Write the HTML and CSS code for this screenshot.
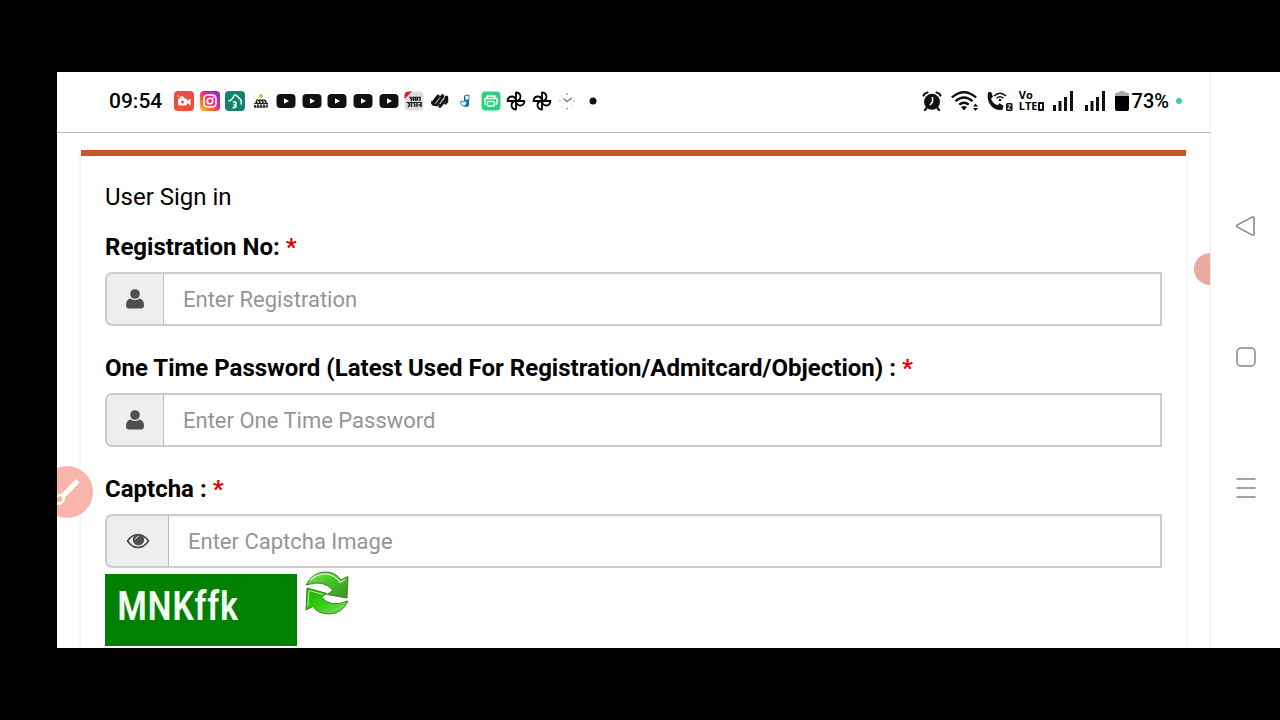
FILE: index.html
```html
<!DOCTYPE html>
<html lang="en">

<head>
  <meta charset="UTF-8">
  <meta name="viewport" content="width=device-width, initial-scale=1.0">
  <title>User Sign in</title>
  <link rel="stylesheet" href="styles.css">
</head>

<body>
  <svg width="0" height="0" class="defs" aria-hidden="true">
    <defs>
      <linearGradient id="insta" x1="0" y1="1" x2="1" y2="0">
        <stop offset="0" stop-color="#ffc83c"/>
        <stop offset="0.3" stop-color="#ff6a2c"/>
        <stop offset="0.6" stop-color="#e5218c"/>
        <stop offset="1" stop-color="#7a2fe0"/>
      </linearGradient>
      <linearGradient id="green" x1="0" y1="0" x2="1" y2="1">
        <stop offset="0" stop-color="#8be06a"/>
        <stop offset="0.45" stop-color="#43c624"/>
        <stop offset="1" stop-color="#3f8f22"/>
      </linearGradient>
      <linearGradient id="green2" x1="0" y1="0" x2="1" y2="1">
        <stop offset="0" stop-color="#25a80a"/>
        <stop offset="0.5" stop-color="#32cf0c"/>
        <stop offset="1" stop-color="#8cdb76"/>
      </linearGradient>
      <symbol id="youtube" viewBox="0 0 20 20">
        <rect x="0.5" y="3" width="19" height="14" rx="4" fill="#111"/>
        <path d="M8 7.2v5.6l5-2.8z" fill="#fff"/>
      </symbol>
      <symbol id="fan" viewBox="0 0 20 20">
        <g fill="none" stroke="#000" stroke-width="1.8" stroke-linejoin="round">
          <path d="M10 10V1.500q4.500.5 4.500 4.300T10 10"/>
          <path d="M10 10h8.500q-.5 4.500-4.300 4.500T10 10"/>
          <path d="M10 10v8.500q-4.500-.5-4.500-4.300T10 10"/>
          <path d="M10 10H1.500q.5-4.500 4.300-4.500T10 10"/>
        </g>
      </symbol>
      <symbol id="signal" viewBox="0 0 22 20">
        <path d="M1 14h3v6H1zM6.500 10h3v10h-3zM12 6h3v14h-3zM18 0h3v20h-3z" fill="#111"/>
      </symbol>
      <symbol id="user" viewBox="0 0 20 20">
        <circle cx="10" cy="5" r="4.800"/>
        <path d="M5.500 9.500Q1 10.500 1 16q0 3.500 3 3.500h12q3 0 3-3.500 0-5.500-4.500-6.500-2 1.500-4.500 1.500t-4.500-1.500z"/>
      </symbol>
    </defs>
  </svg>

  <div class="phone">
    <div class="screen">
      <header class="status">
        <span class="status__time">09:54</span>
        <div class="status__apps">
          <svg viewBox="0 0 20 20"><rect width="20" height="20" rx="4" fill="#ea4f3d"/><rect x="4" y="7.500" width="9" height="7" rx="1.500" fill="#fff"/><path d="M13 10l3.500-2.500v7L13 12z" fill="#fff"/><circle cx="8.500" cy="11" r="1.500" fill="#ea4f3d"/><path d="M5 7.500l1.500-2h3l1 2z" fill="#fff"/><circle cx="4" cy="5" r="0.900" fill="#ffc8be"/></svg>
          <svg viewBox="0 0 20 20"><rect width="20" height="20" rx="4" fill="url(#insta)"/><rect x="4" y="4" width="12" height="12" rx="3.500" fill="none" stroke="#fff" stroke-width="1.600"/><circle cx="10" cy="10" r="2.800" fill="none" stroke="#fff" stroke-width="1.600"/><circle cx="13.500" cy="6.500" r="0.900" fill="#fff"/></svg>
          <svg viewBox="0 0 20 20"><rect width="20" height="20" rx="4" fill="#12836c"/><path d="M3.500 10Q7 9.500 9 5q1-2 3 0l3.500 3.500q1.500 1.500.5 5M8 11.500q3-1.500 3 .5t-2 2q3 0 2 1.500t-3.500 1" fill="none" stroke="#fff" stroke-width="1.500" stroke-linejoin="round"/></svg>
          <svg viewBox="0 0 20 20"><circle cx="10" cy="5" r="2" fill="#e9b52d"/><path d="M5 9.200h9M3 12.500h14M3 16h14" stroke="#222" stroke-width="1.200"/><path d="M5 10l1 2M8 9l1 3M11 9l1 3M14 9l1 3M4 14v2.500M7 13.500v3M10 13.500v3M13 13.500v3M16 13.500v2" stroke="#222" stroke-width="1.800"/></svg>
          <svg><use href="#youtube"/></svg>
          <svg><use href="#youtube"/></svg>
          <svg><use href="#youtube"/></svg>
          <svg><use href="#youtube"/></svg>
          <svg><use href="#youtube"/></svg>
          <svg viewBox="0 0 20 20"><rect x="0.500" y="0.500" width="19" height="19" rx="4" fill="#ddd"/><path d="M.5 8V4.500q0-4 4-4H8z" fill="#e0222c"/><path d="M5 6.200h12M2.500 11.500h15.500" stroke="#222" stroke-width="1.100"/><path d="M6 7.500q3 0 1 2.500M9.500 6v4M11.500 6v3h2V6M16 6v4M4 12q3 1 0 4M7.500 12v4M9.500 12.500q2 0 1 3.500M13 12v4M14.500 14h2M17 12v4" fill="none" stroke="#222" stroke-width="1.500"/></svg>
          <svg viewBox="0 0 20 20"><g fill="none" stroke="#111" stroke-width="3.600" stroke-linecap="round"><path d="M3 12L8 5.500M6.500 13.500L12.500 5M10 15l6.500-8.500"/></g><path d="M2.200 10q-.5 4.500 3 4M17 7q1.500 4-2.500 6" fill="none" stroke="#111" stroke-width="2"/><path d="M5.500 12.500l4.500-6M10 13l4.500-6" stroke="#fff" stroke-width="0.800"/></svg>
          <svg viewBox="0 0 20 20"><path d="M9 7q0-3 2.500-3T14 7v6q0 3-2.500 3T9 13z" fill="#176e95"/><path d="M10 4.500l4-.5v5h-4z" fill="#fff" stroke="#176e95" stroke-width="0.900"/><path d="M9.500 15.500Q6 14 5.500 11.500q.5-2.500 3-.5 3-1.500 3 .5-.2 2-2 4z" fill="#fff" stroke="#399ed0" stroke-width="1.200"/></svg>
          <svg viewBox="0 0 20 20"><rect x="0.500" y="0.500" width="19" height="19" rx="4" fill="#2bd17c"/><path d="M6 7V5h8v2M5.500 13H4V7.500h12V13h-1.500" fill="none" stroke="#fff" stroke-width="1.400" stroke-linejoin="round"/><rect x="6.500" y="10.500" width="7" height="4.500" rx="1" fill="none" stroke="#fff" stroke-width="1.300"/></svg>
          <svg><use href="#fan"/></svg>
          <svg><use href="#fan"/></svg>
          <svg viewBox="0 0 20 20"><path d="M6.500 7.500l3.500 3 5-3.500" fill="none" stroke="#7d6a55" stroke-width="1.200"/><g fill="#999"><circle cx="10" cy="3" r="0.900"/><circle cx="10" cy="17.500" r="0.900"/><circle cx="3" cy="10" r="0.900" fill="#efaaa0"/><circle cx="17" cy="10" r="0.800"/><circle cx="4.500" cy="5" r="0.500"/><circle cx="5" cy="15.500" r="0.500"/><circle cx="15.500" cy="15" r="0.500"/></g></svg>
          <svg viewBox="0 0 20 20"><circle cx="10" cy="10" r="3.500" fill="#111"/></svg>
        </div>
        <div class="status__system">
          <svg class="icon-alarm" viewBox="0 0 20 20"><circle cx="10" cy="10.800" r="8" fill="#111"/><path d="M1.500 4.500q1-2.500 4-3M18.500 4.500q-1-2.500-4-3" fill="none" stroke="#111" stroke-width="2.200" stroke-linecap="round"/><path d="M4.500 17L3 19M15.500 17l1.500 2" stroke="#111" stroke-width="2.200" stroke-linecap="round"/><path d="M10.500 6v5L8 14" fill="none" stroke="#fff" stroke-width="1.500"/></svg>
          <svg class="icon-wifi" viewBox="0 0 28 20"><g fill="none" stroke="#111" stroke-width="2.300"><path d="M.8 6.500q12-10.600 24.400 0M4.500 10.200q8.500-7.400 17 0M8.200 13.700q4.800-4 9.600 0"/></g><path d="M10 16q3-2 6 0l-3 3.500z" fill="#111"/><path d="M24.500 12.500l2.500 3h-5zM22 17h5l-2.500 3z" fill="#111"/></svg>
          <svg class="icon-call" viewBox="0 0 28 20"><path d="M2 1.500l3-.8 2 5-2 2q2 5 6.500 6.500l2-2 4 2.500-1 4q-6 1.500-11-3.500T2 1.500z" fill="#111"/><path d="M8 5q6-5.500 12 0M10.500 7.300q3.500-3 7 0" fill="none" stroke="#111" stroke-width="1.500"/><circle cx="14" cy="9" r="1.300" fill="#111"/><rect x="20" y="12" width="6.500" height="8" rx="1.500" fill="#111"/><path d="M21.700 14h3l-3 4h3" fill="none" stroke="#fff" stroke-width="1"/></svg>
          <div class="volte"><span>Vo</span><span class="volte__lte">LTE<i></i></span></div>
          <svg class="icon-signal"><use href="#signal"/></svg>
          <svg class="icon-signal icon-signal--second"><use href="#signal"/></svg>
          <svg class="icon-battery" viewBox="0 0 14 20"><path d="M4 1.500Q4 0 5.500 0h3Q10 0 10 1.500h2q2 0 2 2V6H0V3.500q0-2 2-2z" fill="#aaa"/><path d="M0 5h14v13q0 2-2 2H2q-2 0-2-2z" fill="#000"/></svg>
          <span class="status__percent">73%</span>
          <i class="status__dot"></i>
        </div>
      </header>

      <main class="page">
        <form class="card">
          <h1 class="card__title">User Sign in</h1>

          <label class="label" for="regno">Registration No: <span class="required">*</span></label>
          <div class="field">
            <span class="field__icon"><svg viewBox="0 0 20 20"><use href="#user"/></svg></span>
            <input class="field__input" type="text" id="regno" placeholder="Enter Registration">
          </div>

          <label class="label" for="otp">One Time Password (Latest Used For Registration/Admitcard/Objection) : <span class="required">*</span></label>
          <div class="field">
            <span class="field__icon"><svg viewBox="0 0 20 20"><use href="#user"/></svg></span>
            <input class="field__input" type="password" id="otp" placeholder="Enter One Time Password">
          </div>

          <label class="label" for="captcha">Captcha : <span class="required">*</span></label>
          <div class="field field--captcha">
            <span class="field__icon field__icon--eye"><svg viewBox="0 0 24 20"><path d="M1.500 10Q6 3.500 12 3.500T22.500 10Q18 16.500 12 16.500T1.500 10z" fill="none" stroke="#444" stroke-width="1.500"/><circle cx="12.500" cy="8.800" r="5.700"/><path d="M9.500 8.500q.3-2.700 3-3" fill="none" stroke="#eee" stroke-width="1"/></svg></span>
            <input class="field__input" type="text" id="captcha" placeholder="Enter Captcha Image">
          </div>

          <div class="captcha">
            <div class="captcha__image">MNKffk</div>
            <button class="captcha__refresh" type="button" aria-label="Refresh">
              <svg viewBox="0 0 44 44">
                <g stroke="#2c7a18" stroke-width="0.900" stroke-linejoin="round">
                  <path d="M1 14Q8 1 20 1q11 0 15.500 8L43 5.500 42 27l-20-3.500 6-4Q19 8 1 14z" fill="url(#green)"/>
                  <path d="M43 30Q37 43 24 43 13 43 8 35.500L1 39l1-22 20 5.500-5.500 3.500Q25 37 43 30z" fill="url(#green2)"/>
                </g>
                <path d="M5 9.500Q13 1.500 23 3.200q7 1.300 12 8l5.500-3" fill="none" stroke="#d4f5c6" stroke-width="1.200"/>
                <path d="M2.800 35.500L4 19.500l14 4" fill="none" stroke="#b9efa6" stroke-width="1"/>
              </svg>
            </button>
          </div>
        </form>
      </main>

      <button class="bubble bubble--brush" type="button" aria-label="Brush">
        <svg viewBox="0 0 52 52"><path d="M24 28L35 16.500" stroke="#fff" stroke-width="5" stroke-linecap="square"/><path d="M21 29q-7-1-9 8 4 1 8 0 5-3 1-8z" fill="none" stroke="#fff" stroke-width="2.500"/></svg>
      </button>
      <button class="bubble bubble--side" type="button" aria-label="Recorder"></button>
    </div>

    <nav class="nav">
      <button class="nav__button" type="button" aria-label="Back"><svg viewBox="0 0 22 22"><path d="M2.500 9.800L17 2.200q2-.9 2 1v15.600q0 1.900-2 1L2.500 12.200q-2-1.200 0-2.400z"/></svg></button>
      <button class="nav__button" type="button" aria-label="Home"><svg viewBox="0 0 22 22"><rect x="2" y="2" width="18" height="18" rx="4"/></svg></button>
      <button class="nav__button" type="button" aria-label="Recent apps"><svg viewBox="0 0 22 22"><path d="M1.500 2h19M1.500 11h19M1.500 20h19"/></svg></button>
    </nav>
  </div>
</body>

</html>
```
FILE: styles.css
```css
* {
  box-sizing: border-box;
}

body {
  margin: 0;
  height: 100vh;
  padding: 72px 0 72px 57px;
  background-color: #000;
  font-family: Roboto, "Liberation Sans", sans-serif;
  color: #000;
  overflow: hidden;
}

svg {
  display: block;
}

.defs {
  position: absolute;
}

button {
  padding: 0;
  border: none;
  background: none;
  cursor: pointer;
}

.phone {
  display: flex;
  height: 100%;
  background-color: #fff;
}

.screen {
  position: relative;
  flex: 1;
  display: flex;
  flex-direction: column;
  overflow: hidden;
}

/* status bar */
.status {
  display: flex;
  align-items: center;
  height: 61px;
  flex-shrink: 0;
  padding: 0 28px 3px 52px;
  border-bottom: 1px solid #bbb;
}

.status__time {
  width: 65px;
  font-size: 21px;
  font-weight: 500;
}

.status__apps {
  display: flex;
  justify-content: space-between;
  width: 429px;
}

.status__apps svg {
  width: 20px;
  height: 20px;
}

.status__system {
  display: flex;
  align-items: center;
  margin-left: auto;
}

.status__system svg {
  height: 20px;
}

.icon-alarm {
  width: 20px;
  margin-right: 9px;
}

.icon-wifi {
  width: 28px;
  margin-right: 7px;
}

.icon-call {
  width: 28px;
  margin-right: 5px;
}

.volte {
  display: flex;
  flex-direction: column;
  gap: 1px;
  margin-right: 8px;
  font-family: "Open Sans", sans-serif;
  font-size: 11px;
  line-height: 10px;
  font-weight: 700;
}

.volte span {
  height: 10px;
}

.volte__lte {
  display: flex;
  align-items: center;
}

.volte i {
  width: 6px;
  height: 9px;
  border: 2px solid #111;
  border-radius: 1px;
}

.icon-signal {
  width: 22px;
  margin-right: 10px;
}

.icon-signal--second {
  margin-right: 9px;
}

.icon-battery {
  width: 14px;
  margin-right: 3px;
}

.status__percent {
  margin-right: 7px;
  font-size: 20px;
  font-weight: 500;
}

.status__dot {
  width: 6px;
  height: 6px;
  border-radius: 50%;
  background-color: #3fd584;
}

/* sign in form */
.page {
  flex: 1;
  min-height: 0;
  padding: 17px 24px 0;
}

.card {
  padding: 24px 24px 0;
  height: 100%;
  border-top: 6px solid #c7562c;
  box-shadow: 0 0 3px rgba(0, 0, 0, 0.12);
}

.card__title {
  margin: 0 0 16px;
  font-size: 24px;
  line-height: 34px;
  font-weight: 400;
}

.label {
  display: block;
  margin-bottom: 8px;
  font-size: 24px;
  line-height: 34px;
  font-weight: 700;
}

.required {
  color: #d00;
}

.field {
  display: flex;
  height: 54px;
  margin-bottom: 25px;
}

.field--captcha {
  margin-bottom: 6px;
}

.field__icon {
  display: flex;
  align-items: center;
  justify-content: center;
  width: 58px;
  border: 2px solid #ccc;
  border-right: none;
  border-radius: 7px 0 0 7px;
  background-color: #eee;
  fill: #4f4f4f;
}

.field__icon svg {
  width: 20px;
  height: 20px;
}

.field__icon--eye {
  width: 63px;
}

.field__icon--eye svg {
  width: 24px;
}

.field__input {
  flex: 1;
  min-width: 0;
  padding: 0 19px;
  border: 2px solid #ccc;
  border-left: 1px solid #bbb;
  border-radius: 0;
  background-color: #fff;
  box-shadow: inset 0 1px 2px rgba(0, 0, 0, 0.06);
  font-family: inherit;
  font-size: 22px;
}

.field__input::placeholder {
  color: #959595;
}

.captcha {
  display: flex;
  align-items: flex-start;
  gap: 8px;
}

.captcha__image {
  width: 192px;
  height: 72px;
  padding-left: 12px;
  background-color: #008000;
  color: #f3fff3;
  font-family: "Liberation Sans Narrow", "Roboto Condensed", "Liberation Sans", sans-serif;
  font-size: 40px;
  line-height: 66px;
  font-weight: 500;
}

.captcha__refresh {
  width: 44px;
  height: 44px;
  margin-top: -3px;
}

/* floating recorder buttons */
.bubble {
  position: absolute;
  border-radius: 50%;
}

.bubble--brush {
  left: -16px;
  top: 394px;
  width: 52px;
  height: 52px;
  background-color: #f9b5ac;
}

.bubble--side {
  right: -16px;
  top: 181px;
  width: 32px;
  height: 32px;
  background-color: #eba9a2;
}

/* navigation bar */
.nav {
  display: flex;
  flex-direction: column;
  align-items: center;
  justify-content: center;
  gap: 109px;
  width: 70px;
  padding-bottom: 7px;
  border-left: 1px solid #eee;
}

.nav__button svg {
  width: 22px;
  height: 22px;
  fill: none;
  stroke: #858585;
  stroke-width: 1.5;
}
```
